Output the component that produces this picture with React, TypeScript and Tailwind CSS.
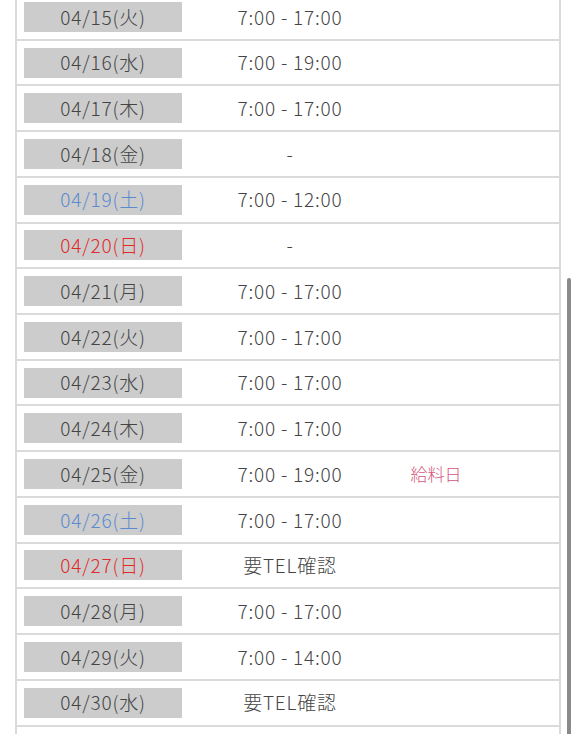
import React from "react";

type Row = { d: string; t: string; c?: "sat" | "sun"; note?: string };

const rows: Row[] = [
  { d: "04/15(火)", t: "7:00 - 17:00" },
  { d: "04/16(水)", t: "7:00 - 19:00" },
  { d: "04/17(木)", t: "7:00 - 17:00" },
  { d: "04/18(金)", t: "-" },
  { d: "04/19(土)", t: "7:00 - 12:00", c: "sat" },
  { d: "04/20(日)", t: "-", c: "sun" },
  { d: "04/21(月)", t: "7:00 - 17:00" },
  { d: "04/22(火)", t: "7:00 - 17:00" },
  { d: "04/23(水)", t: "7:00 - 17:00" },
  { d: "04/24(木)", t: "7:00 - 17:00" },
  { d: "04/25(金)", t: "7:00 - 19:00", note: "給料日" },
  { d: "04/26(土)", t: "7:00 - 17:00", c: "sat" },
  { d: "04/27(日)", t: "要TEL確認", c: "sun" },
  { d: "04/28(月)", t: "7:00 - 17:00" },
  { d: "04/29(火)", t: "7:00 - 14:00" },
  { d: "04/30(水)", t: "要TEL確認" },
];

export default function App() {
  return (
    <div
      className="relative w-[576px] h-[734px] overflow-hidden bg-white text-[#444]"
      style={{ fontFamily: '"Noto Sans CJK JP", "Noto Sans", sans-serif' }}
    >
      <div className="ml-[15px] w-[546px] -mt-[5px] h-[760px] border-l-2 border-r-2 border-[#dadada]">
        {rows.map((r) => (
          <div
            key={r.d}
            className="h-[45.73px] border-b-2 border-[#dadada] flex items-center"
          >
            <div className="w-[175px] pl-[7px] flex items-center">
              <div
                className={
                  "w-[158px] h-[30px] bg-[#cccccc] flex items-center justify-center text-[19px] tracking-[0.8px] font-light " +
                  (r.c === "sat"
                    ? "text-[#5b8ad0]"
                    : r.c === "sun"
                    ? "text-[#e02a2a]"
                    : "text-[#444]")
                }
              >
                {r.d}
              </div>
            </div>
            <div className="w-[196px] text-center text-[19px] tracking-[0.8px] font-light">
              {r.t}
            </div>
            <div className="w-[96px] text-center text-[17px] font-light text-[#d4567d]">
              {r.note ?? ""}
            </div>
          </div>
        ))}
      </div>
      <div className="absolute left-[567px] top-[278px] w-[4px] h-[470px] rounded-full bg-[#8a8a8a]" />
    </div>
  );
}
